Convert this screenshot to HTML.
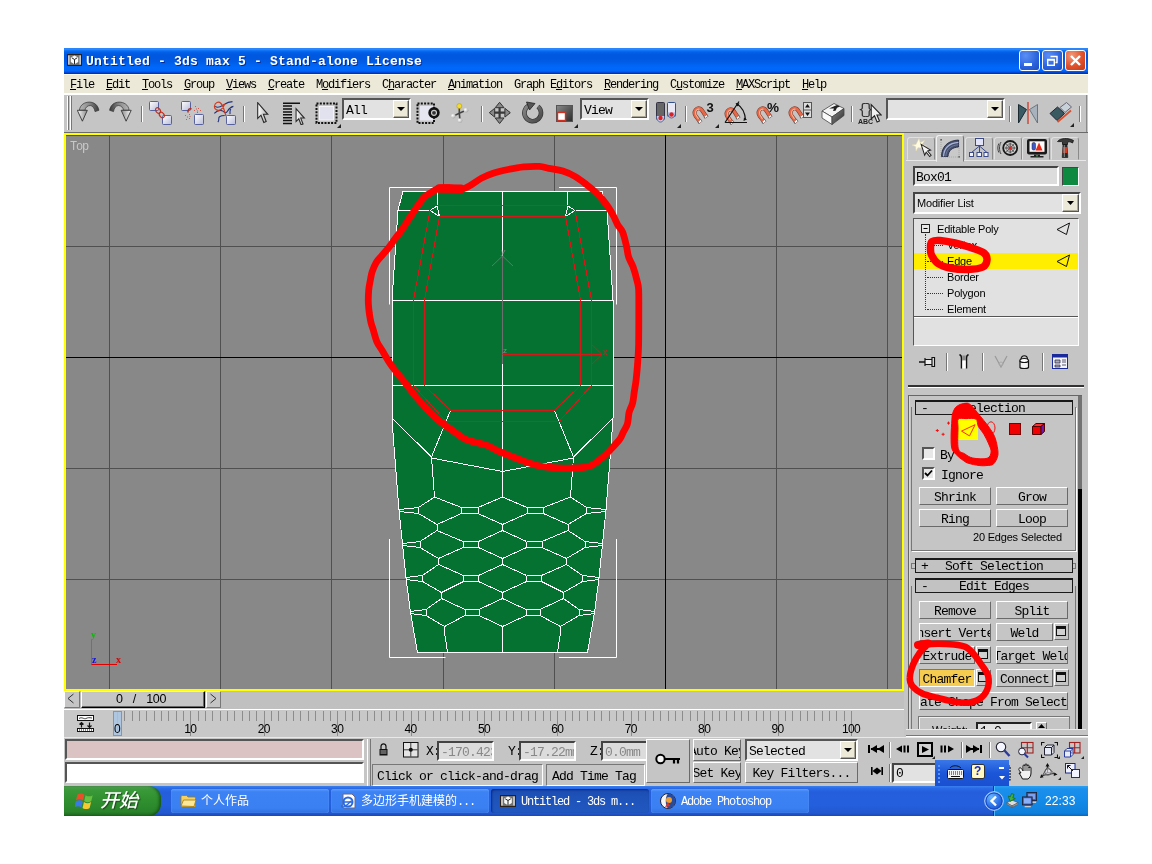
<!DOCTYPE html>
<html lang="zh"><head><meta charset="utf-8"><title>Untitled - 3ds max 5</title>
<style>
html,body{margin:0;padding:0;background:#fff;}
body{width:1152px;height:864px;position:relative;overflow:hidden;will-change:transform;font-family:"Liberation Sans",sans-serif;}
div,svg,span{position:absolute;box-sizing:border-box;}
span{white-space:pre;}
.m12{font:12px/12px "Liberation Mono",monospace;letter-spacing:-1.2px;color:#000;}
.m14{font:13px/14px "Liberation Mono",monospace;letter-spacing:-0.8px;color:#000;}
.s11{font:11px/12px "Liberation Sans",sans-serif;color:#000;letter-spacing:-0.2px;}
.btn{background:#c5c5c5;border:1px solid;border-color:#fff #6a6a6a #6a6a6a #fff;text-align:center;overflow:hidden;}
.btn span{position:static;}
.sunk{border:1px solid;border-color:#555 #fff #fff #555;}
.hdr{background:#c2c2c2;border:1px solid #1a1a1a;border-top-width:2px;text-align:center;}
u{text-decoration:underline;text-underline-offset:1px;}
</style></head>
<body>
<div style="left:64px;top:48px;width:1024px;height:768px;background:#c5c5c5;"></div>
<div style="left:64px;top:48px;width:1024px;height:26px;background:linear-gradient(to bottom,#2a84f8 0%,#2a8aff 5%,#0a6cf4 11%,#0260e8 17%,#0058e0 26%,#0058e2 42%,#005ee8 56%,#0064f4 66%,#0068fc 76%,#0066fa 88%,#0050e0 93%,#0030c0 97%,#0034c4 100%);"></div>
<svg style="left:67px;top:54px" width="15" height="12" viewBox="0 0 15 12"><rect x="0" y="0" width="15" height="12" fill="#2a2018"/><rect x="1" y="1" width="13" height="10" fill="#707070"/><rect x="1.200" y="1.500" width="1.300" height="9" fill="#e0e0e0"/><rect x="12.500" y="1.500" width="1.300" height="9" fill="#e0e0e0"/><path d="M7.500 1.500L11.200 3.500V8L7.500 10.300L3.800 8V3.500Z" fill="#fafafa"/><path d="M7.500 10.300V5.500M7.500 5.500L4.800 3.800M7.500 5.500L10.200 3.800" stroke="#222" stroke-width="1" fill="none"/></svg>
<span style="left:86px;top:54px;font:bold 13px/16px 'Liberation Mono',monospace;letter-spacing:0.2px;color:#fff;text-shadow:1px 1px 0 #0a2a8a;">Untitled - 3ds max 5 - Stand-alone License</span>
<div style="left:1019px;top:50px;width:21px;height:21px;border:1px solid #fff;border-radius:3px;background:radial-gradient(circle at 30% 25%,#5b8ff5 0%,#2a62dc 60%,#1c4cc0 100%);"></div>
<svg style="left:1019px;top:50px" width="21" height="21" viewBox="0 0 21 21"><rect x="5" y="13" width="8" height="3" fill="#fff"/></svg>
<div style="left:1042px;top:50px;width:21px;height:21px;border:1px solid #fff;border-radius:3px;background:radial-gradient(circle at 30% 25%,#5b8ff5 0%,#2a62dc 60%,#1c4cc0 100%);"></div>
<svg style="left:1042px;top:50px" width="21" height="21" viewBox="0 0 21 21"><path d="M8.500 6.500h6.500v6h-1.500" fill="none" stroke="#fff" stroke-width="1.400"/><rect x="5.700" y="9.700" width="6.600" height="5.600" fill="none" stroke="#fff" stroke-width="1.400"/><path d="M5 9.700h8" stroke="#fff" stroke-width="1.800"/></svg>
<div style="left:1065px;top:50px;width:21px;height:21px;border:1px solid #fff;border-radius:3px;background:radial-gradient(circle at 30% 25%,#f09a7a 0%,#e0512c 55%,#c03a18 100%);"></div>
<svg style="left:1065px;top:50px" width="21" height="21" viewBox="0 0 21 21"><path d="M6 6l9 9M15 6l-9 9" stroke="#fff" stroke-width="2.4"/></svg>
<div style="left:64px;top:74px;width:1024px;height:19px;background:#ece9d8;"></div>
<div style="left:64px;top:74px;width:1024px;height:1px;background:#fbf8e6;"></div>
<span class="m12" style="left:70px;top:79px;"><u>F</u>ile</span>
<span class="m12" style="left:106px;top:79px;"><u>E</u>dit</span>
<span class="m12" style="left:142px;top:79px;"><u>T</u>ools</span>
<span class="m12" style="left:184px;top:79px;"><u>G</u>roup</span>
<span class="m12" style="left:226px;top:79px;"><u>V</u>iews</span>
<span class="m12" style="left:268px;top:79px;"><u>C</u>reate</span>
<span class="m12" style="left:316px;top:79px;">M<u>o</u>difiers</span>
<span class="m12" style="left:382px;top:79px;">C<u>h</u>aracter</span>
<span class="m12" style="left:448px;top:79px;"><u>A</u>nimation</span>
<span class="m12" style="left:514px;top:79px;">Graph E<u>d</u>itors</span>
<span class="m12" style="left:604px;top:79px;"><u>R</u>endering</span>
<span class="m12" style="left:670px;top:79px;">C<u>u</u>stomize</span>
<span class="m12" style="left:736px;top:79px;"><u>M</u>AXScript</span>
<span class="m12" style="left:802px;top:79px;"><u>H</u>elp</span>
<div style="left:64px;top:93px;width:1024px;height:40px;background:#c5c5c5;border-top:2px solid #fff;"></div>
<div style="left:1086px;top:95px;width:1px;height:38px;background:#8a8a8a;"></div>
<div style="left:67px;top:96px;width:2px;height:34px;border-left:1px solid #fff;border-right:1px solid #777;"></div>
<div style="left:70px;top:96px;width:2px;height:34px;border-left:1px solid #fff;border-right:1px solid #777;"></div>
<svg width="0" height="0" style="left:0;top:0"><defs>
<linearGradient id="gDark" x1="0" y1="0" x2="1" y2="1"><stop offset="0" stop-color="#8a8a8a"/><stop offset="1" stop-color="#2a2a2a"/></linearGradient>
<linearGradient id="gArc" x1="0" y1="0" x2="1" y2="0"><stop offset="0" stop-color="#b8b8b8"/><stop offset="0.500" stop-color="#8a8a8a"/><stop offset="1" stop-color="#3a3a3a"/></linearGradient>
<linearGradient id="gHead" x1="0" y1="0" x2="1" y2="0"><stop offset="0" stop-color="#fafafa"/><stop offset="1" stop-color="#8a8a8a"/></linearGradient>
<linearGradient id="gCur" x1="0" y1="0" x2="1" y2="0"><stop offset="0" stop-color="#ffffff"/><stop offset="1" stop-color="#b0b0b0"/></linearGradient>
<radialGradient id="gSph" cx="0.35" cy="0.35" r="0.8"><stop offset="0" stop-color="#ffffff"/><stop offset="1" stop-color="#9a9a9a"/></radialGradient>
<linearGradient id="gRot" gradientUnits="userSpaceOnUse" x1="0" y1="0" x2="24" y2="24"><stop offset="0" stop-color="#9a9a9a"/><stop offset="1" stop-color="#3a3a3a"/></linearGradient>
<radialGradient id="gTray" cx="0.35" cy="0.3" r="0.8"><stop offset="0" stop-color="#6ab8ff"/><stop offset="0.6" stop-color="#2a70e8"/><stop offset="1" stop-color="#1a50c8"/></radialGradient>
<linearGradient id="gBox" x1="0" y1="0" x2="1" y2="1"><stop offset="0" stop-color="#ffffff"/><stop offset="1" stop-color="#b8bcd8"/></linearGradient>
<linearGradient id="gMag" x1="0" y1="0" x2="1" y2="1"><stop offset="0" stop-color="#f7b090"/><stop offset="1" stop-color="#d84a28"/></linearGradient>
</defs></svg>
<svg style="left:77px;top:101px" width="23" height="21" viewBox="0 0 23 21"><path d="M2.400 9.300C3 3.500 8 1.100 12.400 1.100C17 1.100 21 4 21.900 9.300L18 10.600C17.500 7 15.500 4.700 13.200 4.500C10.500 4.500 8.300 6.500 8 9.300Z" fill="url(#gArc)" stroke="#333" stroke-width="0.700"/><path d="M0.300 9.300H10.300L5.400 20.200Z" fill="url(#gHead)" stroke="#333" stroke-width="0.900"/></svg>
<svg style="left:109px;top:101px" width="23" height="21" viewBox="0 0 23 21"><g transform="translate(22.500,0) scale(-1,1)"><path d="M2.400 9.300C3 3.500 8 1.100 12.400 1.100C17 1.100 21 4 21.900 9.300L18 10.600C17.500 7 15.500 4.700 13.200 4.500C10.500 4.500 8.300 6.500 8 9.300Z" fill="url(#gArc)" stroke="#333" stroke-width="0.700"/><path d="M0.300 9.300H10.300L5.400 20.200Z" fill="url(#gHead)" stroke="#333" stroke-width="0.900"/></g></svg>
<div style="left:141px;top:106px;width:2px;height:16px;border-left:1px solid #777;border-right:1px solid #fff;"></div>
<svg style="left:149px;top:101px" width="23" height="24" viewBox="0 0 23 24"><rect x="0.500" y="0.500" width="9" height="9" rx="1" fill="url(#gBox)" stroke="#4a5596" stroke-width="0.900"/><rect x="13.500" y="14.500" width="9" height="9" rx="1" fill="url(#gBox)" stroke="#4a5596" stroke-width="0.900"/><ellipse cx="9" cy="9.500" rx="2.100" ry="3" transform="rotate(-38 9 9.500)" fill="none" stroke="#c03020" stroke-width="1.200"/><ellipse cx="12.800" cy="14" rx="2.100" ry="3" transform="rotate(-38 12.800 14)" fill="none" stroke="#c03020" stroke-width="1.200"/></svg>
<svg style="left:181px;top:101px" width="23" height="24" viewBox="0 0 23 24"><rect x="0.500" y="0.500" width="9" height="9" rx="1" fill="url(#gBox)" stroke="#4a5596" stroke-width="0.900"/><rect x="13.500" y="13.500" width="9" height="10" rx="1" fill="url(#gBox)" stroke="#4a5596" stroke-width="0.900"/><path d="M7 11.500c-.5-3 1.500-4.500 3.500-3.500" fill="none" stroke="#b02a20" stroke-width="1.500"/><g fill="#d05a50"><rect x="14" y="5" width="1" height="1"/><rect x="15" y="7.500" width="1" height="1"/><rect x="13" y="9" width="1" height="1"/><rect x="17" y="7" width="1" height="1"/><rect x="16" y="9.500" width="1" height="1"/><rect x="19" y="9" width="1" height="1"/><rect x="16" y="11" width="1" height="1"/><rect x="4" y="14" width="1" height="1"/><rect x="6" y="15.500" width="1" height="1"/><rect x="8" y="13" width="1" height="1"/><rect x="5" y="18" width="1" height="1"/><rect x="8" y="17" width="1" height="1"/><rect x="8.500" y="15" width="1" height="1"/></g></svg>
<svg style="left:213px;top:101px" width="23" height="24" viewBox="0 0 23 24"><rect x="13.500" y="14.500" width="9" height="9" rx="1" fill="url(#gBox)" stroke="#4a5596" stroke-width="0.900"/><path d="M2.200 5.400c3 2.500 6 0 8.700-1.700s3-2.500 8.600-3.100M1.300 12.400c2.500-2.500 5.500-3.500 7.800-2.600s3.500 3.700 5.500 .2s3-4 5.800-4.600M4.800 21c2-1.500 0-4 1.700-5.200s3-1.300 5.200-1.300M17 13.200c-.5-2.500 0-4 .8-5.200" fill="none" stroke="#24357e" stroke-width="1.100"/><path d="M13 15C11 9 10.500 5 8 2.500S2 1.500 1.500 5S5 10.500 8 8.500S11 5 11.500 3" fill="none" stroke="#d03a20" stroke-width="1.200"/></svg>
<div style="left:243px;top:106px;width:2px;height:16px;border-left:1px solid #777;border-right:1px solid #fff;"></div>
<svg style="left:257px;top:102px" width="12" height="22" viewBox="0 0 12 22"><path d="M0.700 0.700 L0.700 16.500 L4 13.200 L6.800 20.500 L9.200 19.500 L6.400 12.300 L10.800 12.300Z" fill="url(#gCur)" stroke="#2a2a2a" stroke-width="1.100"/></svg>
<svg style="left:283px;top:102px" width="23" height="23" viewBox="0 0 23 23"><path d="M0 1.2h17M0 4.1h9M0 7.0h9M0 9.9h9M0 12.8h9M0 15.7h9M0 18.6h9M0 21.5h9" stroke="#111" stroke-width="1.500"/><g transform="translate(12.500,6) scale(.82)"><path d="M0.700 0.700 L0.700 16.500 L4 13.200 L6.800 20.500 L9.200 19.500 L6.400 12.300 L10.800 12.300Z" fill="url(#gCur)" stroke="#2a2a2a" stroke-width="1.300"/></g></svg>
<svg style="left:315px;top:102px" width="23" height="22" viewBox="0 0 23 22"><rect x="1.500" y="1.500" width="20" height="19.500" fill="none" stroke="#111" stroke-width="2" stroke-dasharray="2 1.300"/><rect x="4.500" y="4.500" width="14" height="13.500" fill="#e2e2ee" stroke="#f4f4f8" stroke-width="1"/></svg>
<svg style="left:337px;top:124px" width="4" height="4" viewBox="0 0 4 4"><path d="M4 0v4h-4z" fill="#222"/></svg>
<div style="left:342px;top:98px;width:69px;height:22px;background:#e2e2e2;border:2px solid;border-color:#555 #fff #fff #555;"></div>
<span class="m14" style="left:346px;top:104px;">All</span>
<div style="left:393px;top:100px;width:16px;height:18px;background:#ece9d8;border:1px solid;border-color:#fff #555 #555 #fff;box-shadow:inset -1px -1px 0 #aca899;"></div>
<svg style="left:397px;top:107px" width="8" height="4" viewBox="0 0 8 4"><path d="M0 0h8l-4 4z" fill="#000"/></svg>
<svg style="left:416px;top:102px" width="25" height="22" viewBox="0 0 25 22"><rect x="1.500" y="1.500" width="16.500" height="19.500" fill="none" stroke="#111" stroke-width="2" stroke-dasharray="2 1.300"/><rect x="4" y="4" width="13" height="14.500" fill="#e6e6f0"/><circle cx="18" cy="10.800" r="5.700" fill="#111"/><circle cx="18" cy="10.800" r="2.500" fill="#333" stroke="#c8c8c8" stroke-width="1.200"/></svg>
<svg style="left:450px;top:103px" width="20" height="21" viewBox="0 0 20 21"><path d="M9.300 10.200L9.300 3.100M9.300 10.200L16 7.200M9.300 10.200L3.300 13.100M9.300 10.200L10 17.600" stroke="#444" stroke-width="1.600" fill="none"/><circle cx="9.300" cy="3.100" r="2.500" fill="#f4dc30" stroke="#b89a10" stroke-width=".6"/><circle cx="16" cy="7.200" r="2.400" fill="url(#gSph)"/><circle cx="3.300" cy="13.100" r="2.400" fill="url(#gSph)"/><circle cx="10" cy="17.600" r="2.400" fill="url(#gSph)"/></svg>
<div style="left:481px;top:106px;width:2px;height:16px;border-left:1px solid #777;border-right:1px solid #fff;"></div>
<svg style="left:489px;top:102px" width="22" height="22" viewBox="0 0 22 22"><path d="M10.600 1.500V20.500M1.500 10.700H20.500" stroke="#3a3a3a" stroke-width="2.200"/><path d="M10.600 0.300L15 5.700H6.200ZM10.600 21.500L15 16H6.200ZM0.300 10.700L5.700 6.300V15.100ZM21.300 10.700L15.900 6.300V15.100Z" fill="#8a8a8a" stroke="#333" stroke-width="1"/></svg>
<svg style="left:520px;top:101px" width="24" height="24" viewBox="0 0 24 24"><path d="M9 4.500A8.300 8.300 0 1 0 18 5.500" fill="none" stroke="#333" stroke-width="4.600"/><path d="M9 4.500A8.300 8.300 0 1 0 18 5.500" fill="none" stroke="url(#gRot)" stroke-width="3.200"/><path d="M6.500 1L15 2.500L9.500 9Z" fill="#555" stroke="#222" stroke-width=".8"/></svg>
<svg style="left:556px;top:105px" width="17" height="17" viewBox="0 0 17 17"><rect x="0.5" y="0.5" width="16" height="16" fill="url(#gDark)" stroke="#555"/><rect x="1.5" y="7.5" width="8" height="8" fill="#fff" stroke="#d03020" stroke-width="1.4"/></svg>
<svg style="left:574px;top:124px" width="4" height="4" viewBox="0 0 4 4"><path d="M4 0v4h-4z" fill="#222"/></svg>
<div style="left:580px;top:98px;width:69px;height:22px;background:#e2e2e2;border:2px solid;border-color:#555 #fff #fff #555;"></div>
<span class="m14" style="left:584px;top:104px;">View</span>
<div style="left:631px;top:100px;width:16px;height:18px;background:#ece9d8;border:1px solid;border-color:#fff #555 #555 #fff;box-shadow:inset -1px -1px 0 #aca899;"></div>
<svg style="left:635px;top:107px" width="8" height="4" viewBox="0 0 8 4"><path d="M0 0h8l-4 4z" fill="#000"/></svg>
<svg style="left:656px;top:102px" width="21" height="22" viewBox="0 0 21 22"><rect x="0.5" y="0.5" width="8" height="17" rx="1" fill="#666" stroke="#334"/><rect x="11.500" y="0.5" width="8" height="14" rx="1" fill="#e8e8f4" stroke="#33508a"/><path d="M0.500 14c0 8 8 8 8 0M11.500 10c0 8 8 8 8 0" fill="#c8d0ee" stroke="#33508a" stroke-width=".8"/><circle cx="4.500" cy="16" r="2.200" fill="#e02020"/><circle cx="15.500" cy="12.500" r="2.200" fill="#e02020"/></svg>
<svg style="left:677px;top:124px" width="4" height="4" viewBox="0 0 4 4"><path d="M4 0v4h-4z" fill="#222"/></svg>
<div style="left:685px;top:106px;width:2px;height:16px;border-left:1px solid #777;border-right:1px solid #fff;"></div>
<svg style="left:692px;top:102px" width="23" height="23" viewBox="0 0 23 23"><path d="M8.600 20.500L3.500 13.800C0.800 9.500 4.800 4.800 8.500 6.800C10.200 7.800 12.500 12.300 14.600 15.400" fill="none" stroke="#7a3a28" stroke-width="4" stroke-linecap="butt"/><path d="M8.600 20.500L3.500 13.800C0.800 9.500 4.800 4.800 8.500 6.800C10.200 7.800 12.500 12.300 14.600 15.400" fill="none" stroke="#e8684a" stroke-width="2.900"/><path d="M6.500 17L3.800 12.500C2.500 9.500 5 6.500 7.500 7.300" fill="none" stroke="#f6b498" stroke-width="1.100"/><path d="M8.600 20.500L7.300 18.800M14.600 15.400L13.500 13.700" stroke="#555" stroke-width="4.400"/><path d="M8.600 20.200L7.500 18.800M14.500 15.100L13.600 13.800" stroke="#fafafa" stroke-width="3"/><text x="14.500" y="9.500" font-family="Liberation Sans,sans-serif" font-weight="bold" font-size="13" fill="#111">3</text></svg>
<svg style="left:715px;top:124px" width="4" height="4" viewBox="0 0 4 4"><path d="M4 0v4h-4z" fill="#222"/></svg>
<svg style="left:724px;top:100px" width="25" height="25" viewBox="0 0 25 25"><g transform="translate(0,3)"><path d="M8.600 20.500L3.500 13.800C0.800 9.500 4.800 4.800 8.500 6.800C10.200 7.800 12.500 12.300 14.600 15.400" fill="none" stroke="#7a3a28" stroke-width="4" stroke-linecap="butt"/><path d="M8.600 20.500L3.500 13.800C0.800 9.500 4.800 4.800 8.500 6.800C10.200 7.800 12.500 12.300 14.600 15.400" fill="none" stroke="#e8684a" stroke-width="2.900"/><path d="M6.500 17L3.800 12.500C2.500 9.500 5 6.500 7.500 7.300" fill="none" stroke="#f6b498" stroke-width="1.100"/><path d="M8.600 20.500L7.300 18.800M14.600 15.400L13.500 13.700" stroke="#555" stroke-width="4.400"/><path d="M8.600 20.200L7.500 18.800M14.500 15.100L13.600 13.800" stroke="#fafafa" stroke-width="3"/></g><path d="M1 22.500h22M1 22.500L15 1.500" stroke="#111" stroke-width="1.2" fill="none"/><path d="M13 4c5 3 8 9 8.500 16" fill="none" stroke="#111" stroke-width="1.200"/><path d="M11.500 3l4 .5l-2 3zM19.500 21l3.500-1.500l-3-2z" fill="#111"/></svg>
<svg style="left:756px;top:102px" width="24" height="23" viewBox="0 0 24 23"><path d="M8.600 20.500L3.500 13.800C0.800 9.500 4.800 4.800 8.500 6.800C10.200 7.800 12.500 12.300 14.600 15.400" fill="none" stroke="#7a3a28" stroke-width="4" stroke-linecap="butt"/><path d="M8.600 20.500L3.500 13.800C0.800 9.500 4.800 4.800 8.500 6.800C10.200 7.800 12.500 12.300 14.600 15.400" fill="none" stroke="#e8684a" stroke-width="2.900"/><path d="M6.500 17L3.800 12.500C2.500 9.500 5 6.500 7.500 7.300" fill="none" stroke="#f6b498" stroke-width="1.100"/><path d="M8.600 20.500L7.300 18.800M14.600 15.400L13.500 13.700" stroke="#555" stroke-width="4.400"/><path d="M8.600 20.200L7.500 18.800M14.500 15.100L13.600 13.800" stroke="#fafafa" stroke-width="3"/><text x="11" y="10" font-family="Liberation Sans,sans-serif" font-weight="bold" font-size="13.500" fill="#111">%</text></svg>
<svg style="left:788px;top:102px" width="24" height="23" viewBox="0 0 24 23"><path d="M8.600 20.500L3.500 13.800C0.800 9.500 4.800 4.800 8.500 6.800C10.200 7.800 12.500 12.300 14.600 15.400" fill="none" stroke="#7a3a28" stroke-width="4" stroke-linecap="butt"/><path d="M8.600 20.500L3.500 13.800C0.800 9.500 4.800 4.800 8.500 6.800C10.200 7.800 12.500 12.300 14.600 15.400" fill="none" stroke="#e8684a" stroke-width="2.900"/><path d="M6.500 17L3.800 12.500C2.500 9.500 5 6.500 7.500 7.300" fill="none" stroke="#f6b498" stroke-width="1.100"/><path d="M8.600 20.500L7.300 18.800M14.600 15.400L13.500 13.700" stroke="#555" stroke-width="4.400"/><path d="M8.600 20.200L7.500 18.800M14.500 15.100L13.600 13.800" stroke="#fafafa" stroke-width="3"/><rect x="15.500" y="0.500" width="8" height="15" fill="#ddd" stroke="#555"/><path d="M17 5.500h5l-2.500-3.500zM17 10.500h5l-2.500 3.500z" fill="#111"/><path d="M15.500 8h8" stroke="#555"/></svg>
<svg style="left:821px;top:102px" width="24" height="23" viewBox="0 0 24 23"><path d="M1 9L13 1.500L23 6.500L11 15Z" fill="#f4f4f4" stroke="#444" stroke-width=".8"/><path d="M1 9v7l10 6.500V15z" fill="#fafafa" stroke="#444" stroke-width=".8"/><path d="M11 15l12-8.500v7L11 22.500z" fill="url(#gDark)" stroke="#444" stroke-width=".8"/><path d="M8 6.500l8-3.500l3 1.500l-3 1.300l-1.500 3l-2.500 .2l1-2.500z" fill="#222"/></svg>
<div style="left:851px;top:106px;width:2px;height:16px;border-left:1px solid #777;border-right:1px solid #fff;"></div>
<svg style="left:858px;top:101px" width="24" height="24" viewBox="0 0 24 24"><text x="0" y="13" font-family="Liberation Mono,monospace" font-size="15" letter-spacing="-2.500" fill="#333">{}</text><text x="0" y="23" font-family="Liberation Sans,sans-serif" font-weight="bold" font-size="7" fill="#222">ABC</text><g transform="translate(12.500,3)"><path d="M0.700 0.700 L0.700 15 L4 11.800 L6.600 18 L9 17 L6.400 11 L10.800 11Z" fill="#f2f2f2" stroke="#222" stroke-width="1.100"/></g></svg>
<div style="left:886px;top:98px;width:119px;height:22px;background:#e2e2e2;border:2px solid;border-color:#555 #fff #fff #555;"></div>
<div style="left:987px;top:100px;width:16px;height:18px;background:#ece9d8;border:1px solid;border-color:#fff #555 #555 #fff;box-shadow:inset -1px -1px 0 #aca899;"></div>
<svg style="left:991px;top:107px" width="8" height="4" viewBox="0 0 8 4"><path d="M0 0h8l-4 4z" fill="#000"/></svg>
<div style="left:1009px;top:106px;width:2px;height:16px;border-left:1px solid #777;border-right:1px solid #fff;"></div>
<svg style="left:1017px;top:102px" width="22" height="22" viewBox="0 0 22 22"><path d="M1.500 2.500V21L9.500 7.500Z" fill="#3a5a64" stroke="#1a2a30"/><path d="M20.500 2.500V21L12.500 7.500Z" fill="#a8b2bc" stroke="#5a6470" stroke-width=".8"/><path d="M11 0v22" stroke="#d04030" stroke-width="1.400"/></svg>
<svg style="left:1049px;top:102px" width="23" height="22" viewBox="0 0 23 22"><path d="M1 11.500L8.500 5l7 6.500l-7.500 7z" fill="#3a5a62" stroke="#223"/><path d="M11 5.500l6.500-5l5 4.500l-6.500 5.500z" fill="#c8d0d8" stroke="#667"/><path d="M8.500 20L22 8.500" stroke="#d85030" stroke-width="1.800"/></svg>
<svg style="left:1070px;top:123px" width="4" height="4" viewBox="0 0 4 4"><path d="M4 0v4h-4z" fill="#222"/></svg>
<div style="left:1079px;top:106px;width:2px;height:16px;border-left:1px solid #777;border-right:1px solid #fff;"></div>
<svg style="left:64px;top:133px" width="840" height="558" viewBox="64 133 840 558"><rect x="64" y="133" width="840" height="558" fill="#ffff00"/><rect x="66" y="135" width="836" height="554" fill="#888888"/><path d="M109.5 135V689" stroke="#505050" stroke-width="1"/><path d="M220.5 135V689" stroke="#505050" stroke-width="1"/><path d="M331.5 135V689" stroke="#505050" stroke-width="1"/><path d="M443.5 135V689" stroke="#505050" stroke-width="1"/><path d="M554.5 135V689" stroke="#505050" stroke-width="1"/><path d="M776.5 135V689" stroke="#505050" stroke-width="1"/><path d="M887.5 135V689" stroke="#505050" stroke-width="1"/><path d="M66 246.5H902" stroke="#505050" stroke-width="1"/><path d="M66 468.5H902" stroke="#505050" stroke-width="1"/><path d="M66 579.5H902" stroke="#505050" stroke-width="1"/><path d="M66 135.500H902" stroke="#4a4a5a" stroke-width="1"/><path d="M665.5 135V689M66 357.500H902" stroke="#000" stroke-width="1"/><text x="70" y="150" font-family="Liberation Mono,monospace" font-size="12" letter-spacing="-1.2" fill="#c8c8c8">Top</text><polygon points="403.0,191.5 398.0,210 392.0,300 392.0,418 393.5,440 399.0,510 402.5,544 406.0,578 410.5,612.5 417.5,652.5 587.5,652.5 594.5,612.5 599.0,578 602.5,544 606.0,510 611.5,440 613.0,418 613.0,300 607.0,210 602.0,191.5" fill="#067232" stroke="#fff" stroke-width="1" shape-rendering="crispEdges"/><path d="M398.0 210.5 L430 210.5 M575 210.5 L607.0 210.5 M392 300.5 L613 300.5 M392 385.5 L613 385.5 M502.5 191.5 L502.5 256 M502.5 364 L502.5 471.5 M502.5 626.5 L502.5 652 M438 192 L437 206 L439.5 216.5 M567.0 192 L568.0 206 L565.5 216.5 M430 210.5 L437 206 M575.0 210.5 L568.0 206 M430 210.5 L439.5 216.5 M575.0 210.5 L565.5 216.5 M392 418 L431.5 457 M613.0 418 L573.5 457 M450.5 410.5 L431.5 457 M554.5 410.5 L573.5 457 M431.5 458 L502.5 471.5 M573.5 458 L502.5 471.5 M431.5 457 L434.5 497 M573.5 457 L570.5 497 M502.5 471.5 L502.5 496.5 M502.5 497 L478.0 507.5 M502.5 497 L527.0 507.5 M502.5 524.5 L478.0 513.5 M502.5 524.5 L527.0 513.5 M478.0 507.5 L461.5 507.5 L461.5 513.5 L478.0 513.5 L478.0 507.5 M527.0 507.5 L543.5 507.5 L543.5 513.5 L527.0 513.5 L527.0 507.5 M461.5 507.5 L434.5 497 M543.5 507.5 L570.5 497 M461.5 513.5 L437.0 524.5 M543.5 513.5 L568.0 524.5 M434.5 497 L418.5 507.5 M570.5 497 L586.5 507.5 M437.0 524.5 L418.5 513.5 M568.0 524.5 L586.5 513.5 M418.5 507.5 L418.5 513.5 M586.5 507.5 L586.5 513.5 M418.5 507.5 L399.0 509.5 M586.5 507.5 L606.0 509.5 M418.5 513.5 L399.0 511.5 M586.5 513.5 L606.0 511.5 M502.5 524.5 L502.5 530.5 M437.0 524.5 L437.0 530.5 M568.0 524.5 L568.0 530.5 M502.5 530.5 L478.5 541.5 M502.5 530.5 L526.5 541.5 M502.5 558.5 L478.5 547.5 M502.5 558.5 L526.5 547.5 M478.5 541.5 L463.0 541.5 L463.0 547.5 L478.5 547.5 L478.5 541.5 M526.5 541.5 L542.0 541.5 L542.0 547.5 L526.5 547.5 L526.5 541.5 M463.0 541.5 L437.0 530.5 M542.0 541.5 L568.0 530.5 M463.0 547.5 L438.5 558.5 M542.0 547.5 L566.5 558.5 M437.0 530.5 L420.0 541.5 M568.0 530.5 L585.0 541.5 M438.5 558.5 L420.0 547.5 M566.5 558.5 L585.0 547.5 M420.0 541.5 L420.0 547.5 M585.0 541.5 L585.0 547.5 M420.0 541.5 L402.5 543.5 M585.0 541.5 L602.5 543.5 M420.0 547.5 L402.5 545.5 M585.0 547.5 L602.5 545.5 M502.5 558.5 L502.5 564.5 M438.5 558.5 L438.5 564.5 M566.5 558.5 L566.5 564.5 M502.5 564.5 L478.5 575.5 M502.5 564.5 L526.5 575.5 M502.5 592.5 L478.5 581.5 M502.5 592.5 L526.5 581.5 M478.5 575.5 L463.5 575.5 L463.5 581.5 L478.5 581.5 L478.5 575.5 M526.5 575.5 L541.5 575.5 L541.5 581.5 L526.5 581.5 L526.5 575.5 M463.5 575.5 L438.5 564.5 M541.5 575.5 L566.5 564.5 M463.5 581.5 L441.5 592.5 M541.5 581.5 L563.5 592.5 M438.5 564.5 L422.5 575.5 M566.5 564.5 L582.5 575.5 M441.5 592.5 L422.5 581.5 M563.5 592.5 L582.5 581.5 M422.5 575.5 L422.5 581.5 M582.5 575.5 L582.5 581.5 M422.5 575.5 L406.0 577.5 M582.5 575.5 L599.0 577.5 M422.5 581.5 L406.0 579.5 M582.5 581.5 L599.0 579.5 M502.5 592.5 L502.5 598.5 M441.5 592.5 L441.5 598.5 M563.5 592.5 L563.5 598.5 M502.5 598.5 L479.0 609.5 M502.5 598.5 L526.0 609.5 M502.5 626.5 L479.0 615.5 M502.5 626.5 L526.0 615.5 M479.0 609.5 L465.0 609.5 L465.0 615.5 L479.0 615.5 L479.0 609.5 M526.0 609.5 L540.0 609.5 L540.0 615.5 L526.0 615.5 L526.0 609.5 M465.0 609.5 L441.5 598.5 M540.0 609.5 L563.5 598.5 M465.0 615.5 L444.5 626.5 M540.0 615.5 L560.5 626.5 M441.5 598.5 L426.0 609.5 M563.5 598.5 L579.0 609.5 M444.5 626.5 L426.0 615.5 M560.5 626.5 L579.0 615.5 M426.0 609.5 L426.0 615.5 M579.0 609.5 L579.0 615.5 M426.0 609.5 L410.5 611.5 M579.0 609.5 L594.5 611.5 M426.0 615.5 L410.5 613.5 M579.0 615.5 L594.5 613.5 M502.5 626.5 L502.5 632.5 M444.5 626.5 L444.5 632.5 M560.5 626.5 L560.5 632.5 M444.5 632.5 L447.5 652 M560.5 632.5 L557.5 652" fill="none" stroke="#fff" stroke-width="1" shape-rendering="crispEdges"/><path d="M437 205.5 L568 205.5 M439.5 216.5 L565.5 216.5 M430 210.5 L413.5 300 L413.5 385.5 L446 421.5 L502.5 421.5 M575.0 210.5 L591.5 300 L591.5 385.5 L559.0 421.5 L502.5 421.5 M439.5 216.5 L424.5 300 L424.5 385.5 L450.5 410.5 L502.5 410.5 M565.5 216.5 L580.5 300 L580.5 385.5 L554.5 410.5 L502.5 410.5" fill="none" stroke="#d81818" stroke-width="1" shape-rendering="crispEdges"/><path d="M502.5 256V364M502.5 256L492 266M502.5 256L513 266" stroke="#6e6e6e" stroke-width="1" fill="none"/><path d="M502.5 354.500H602M592 345L602 354.500L592 364" stroke="#d81818" stroke-width="1" fill="none"/><text x="603" y="355" font-family="Liberation Sans,sans-serif" font-size="9" fill="#d02020">x</text><text x="503" y="353" font-family="Liberation Sans,sans-serif" font-size="8" fill="#8a8a8a">z</text><text x="501" y="254" font-family="Liberation Sans,sans-serif" font-size="8" font-style="italic" fill="#8a8a8a">y</text><path d="M433 187.500H389.500V304.500M559 187.500H616.500V304.500M389.500 539V657.500H445.500M616.500 539V657.500H559" fill="none" stroke="#fff" stroke-width="1"/><path d="M91.500 664.500V640" stroke="#00c000" stroke-width="1"/><path d="M91.500 664.500H117" stroke="#e00000" stroke-width="1"/><text x="91" y="638" font-family="Liberation Serif,serif" font-size="10" font-weight="bold" fill="#00c000">y</text><text x="92" y="663" font-family="Liberation Serif,serif" font-size="10" font-weight="bold" fill="#1010e0">z</text><text x="116" y="663" font-family="Liberation Serif,serif" font-size="10" font-weight="bold" fill="#e00000">x</text><path d="M432.0 192.0C434.6 190.3 436.3 188.7 439.4 188.0C442.4 187.3 446.7 187.6 450.3 187.8C453.9 188.0 457.9 189.7 461.2 189.3C464.6 188.9 467.2 187.1 470.6 185.2C474.0 183.3 478.0 180.1 481.6 178.1C485.2 176.1 488.1 174.8 492.5 173.4C496.9 172.0 502.9 170.6 508.1 169.5C513.3 168.4 518.5 167.4 523.8 166.9C529.0 166.4 535.2 166.2 539.4 166.4C543.6 166.7 544.9 167.6 548.8 168.4C552.6 169.2 558.4 169.7 562.8 171.1C567.2 172.5 571.4 174.4 575.3 176.6C579.2 178.8 582.9 181.8 586.2 184.4C589.6 187.0 592.9 189.7 595.6 192.2C598.3 194.7 600.4 196.9 602.5 199.5C604.6 202.1 606.7 204.8 608.5 207.5C610.3 210.2 612.0 213.1 613.5 216.0C615.0 218.9 616.3 222.3 617.8 225.0C619.3 227.7 621.2 228.5 622.6 232.0C624.0 235.5 625.4 241.6 626.4 245.8C627.4 250.0 627.5 253.5 628.6 257.0C629.7 260.5 631.6 262.8 633.0 266.7C634.4 270.6 636.1 276.9 637.0 280.6C637.9 284.3 638.3 284.4 638.6 289.0C638.9 293.6 638.8 298.7 638.8 308.0C638.8 317.3 638.8 335.5 638.6 345.0C638.4 354.5 637.9 359.2 637.5 365.0C637.1 370.8 636.6 375.6 636.1 380.0C635.6 384.4 634.9 387.8 634.3 391.6C633.7 395.5 633.5 399.6 632.6 403.1C631.7 406.6 630.0 408.9 629.1 412.4C628.2 415.9 628.4 420.7 627.4 424.0C626.4 427.3 624.5 429.6 623.3 432.1C622.0 434.6 621.8 436.3 619.9 439.0C618.0 441.7 614.7 445.2 611.8 448.3C608.9 451.4 606.2 454.5 602.5 457.5C598.8 460.5 594.4 464.4 589.8 466.2C585.2 467.9 580.1 467.7 574.7 468.0C569.3 468.3 562.7 468.1 557.4 467.9C552.1 467.7 547.2 467.3 542.9 466.6C538.6 465.9 535.4 464.9 531.6 463.8C527.8 462.7 524.1 461.2 520.3 459.8C516.5 458.4 512.8 456.8 509.0 455.3C505.2 453.8 501.5 452.5 497.7 450.8C493.9 449.1 490.2 446.5 486.4 445.1C482.6 443.7 478.9 443.4 475.1 442.3C471.4 441.2 467.6 440.4 463.9 438.4C460.1 436.4 456.4 433.1 452.6 430.5C448.8 427.9 445.1 425.6 441.3 422.6C437.5 419.6 433.1 415.5 430.0 412.4C426.9 409.3 425.1 407.0 422.5 404.1C419.9 401.2 417.1 398.1 414.4 394.8C411.7 391.5 409.2 388.1 406.3 384.4C403.4 380.7 399.7 376.3 397.0 372.8C394.3 369.3 392.4 367.1 390.1 363.6C387.8 360.1 385.3 355.7 383.1 352.0C380.9 348.3 378.4 345.3 376.8 341.6C375.2 337.9 374.3 333.2 373.3 330.0C372.3 326.8 371.7 325.4 371.0 322.6C370.3 319.8 369.8 316.8 369.3 313.3C368.9 309.8 368.4 305.7 368.3 301.8C368.2 297.9 368.4 293.9 368.7 290.2C369.0 286.5 369.8 282.9 370.4 279.8C371.0 276.7 371.2 274.6 372.2 271.7C373.2 268.8 374.6 265.1 376.2 262.4C377.8 259.7 379.9 258.0 382.0 255.5C384.1 253.0 386.8 250.1 388.9 247.4C391.0 244.7 392.6 242.2 394.7 239.3C396.8 236.4 398.7 234.3 401.7 230.0C404.7 225.7 408.9 218.8 412.5 213.5C416.1 208.2 420.2 201.6 423.5 198.0C426.8 194.4 429.4 193.7 432.0 192.0Z" fill="none" stroke="#ff0000" stroke-width="6.800" stroke-linejoin="round"/><path d="M439 188.600L461 188.800" fill="none" stroke="#ff0000" stroke-width="8.500" stroke-linecap="round"/></svg>
<div style="left:906px;top:160px;width:180px;height:1px;background:#e8e8e8;"></div>
<div style="left:907px;top:137px;width:28px;height:23px;background:#c5c5c5;border:1px solid;border-color:#e0e0e0 #8a8a8a transparent #e0e0e0;border-radius:3px 3px 0 0;"></div>
<div style="left:936px;top:135px;width:28px;height:27px;background:#c9c9c9;border:1px solid;border-color:#f0f0f0 #777 #c9c9c9 #f0f0f0;border-radius:3px 3px 0 0;"></div>
<div style="left:965px;top:137px;width:28px;height:23px;background:#c5c5c5;border:1px solid;border-color:#e0e0e0 #8a8a8a transparent #e0e0e0;border-radius:3px 3px 0 0;"></div>
<div style="left:994px;top:137px;width:28px;height:23px;background:#c5c5c5;border:1px solid;border-color:#e0e0e0 #8a8a8a transparent #e0e0e0;border-radius:3px 3px 0 0;"></div>
<div style="left:1022px;top:137px;width:28px;height:23px;background:#c5c5c5;border:1px solid;border-color:#e0e0e0 #8a8a8a transparent #e0e0e0;border-radius:3px 3px 0 0;"></div>
<div style="left:1051px;top:137px;width:28px;height:23px;background:#c5c5c5;border:1px solid;border-color:#e0e0e0 #8a8a8a transparent #e0e0e0;border-radius:3px 3px 0 0;"></div>
<svg style="left:912px;top:138px" width="20" height="21" viewBox="0 0 20 21"><path d="M7 0.500l1.200 4.300l4.300-2.300l-2.500 4l4.500 1.500l-4.500 1l-1.500 1l-2.500-.5l-2 3.500l-.3-4.500l-3.700-1.500l4-.5z" fill="#fffbe0" stroke="#e8dca8" stroke-width=".5"/><g transform="translate(8.500,6) scale(.72)"><path d="M0.700 0.700 L0.700 16.500 L4 13.200 L6.800 20.500 L9.200 19.500 L6.400 12.300 L10.800 12.300Z" fill="#f6f6f6" stroke="#222" stroke-width="1.400" transform="rotate(-18 0 0)"/></g></svg>
<svg style="left:940px;top:138px" width="21" height="20" viewBox="0 0 21 20"><path d="M1.500 18.500C1.500 8.500 8 2.500 18.500 2V9C12.500 9.500 8.500 12 8 18.500Z" fill="#46506e" stroke="#1a2038" stroke-width=".8"/><path d="M3.500 18.500C4 10 9.500 5 18.500 4.300" fill="none" stroke="#aab4d8" stroke-width="1.300"/><path d="M5.800 18.500C6.300 11.500 10.500 7.300 18.500 6.800" fill="none" stroke="#6a769c" stroke-width="1"/><rect x="0.500" y="1.200" width="1.200" height="1.200" fill="#111"/><rect x="18.500" y="18.300" width="1.200" height="1.200" fill="#111"/><path d="M1 2v16.500M1.500 19h17M19 2.500v16" fill="none" stroke="#555" stroke-width=".5" stroke-dasharray=".6 1.400"/></svg>
<svg style="left:968px;top:138px" width="22" height="20" viewBox="0 0 22 20"><rect x="7.500" y="0.500" width="8" height="7" fill="#e4e4f8" stroke="#3a4a8a"/><path d="M11.500 8L3.500 14.500M11.500 8v6.500M11.500 8L19 14.500" fill="none" stroke="#3a4a8a"/><rect x="1.500" y="14.500" width="4" height="4" fill="#f4f4ff" stroke="#3a4a8a"/><rect x="9" y="14.500" width="4.500" height="4" fill="#f4f4ff" stroke="#3a4a8a"/><rect x="16" y="14.500" width="4" height="4" fill="#f4f4ff" stroke="#3a4a8a"/></svg>
<svg style="left:996px;top:139px" width="24" height="20" viewBox="0 0 24 20"><circle cx="14.200" cy="9" r="7" fill="#d8d8d8" stroke="#1a1a1a" stroke-width="1.800"/><circle cx="14.200" cy="9" r="4.200" fill="#c0c0c0" stroke="#555" stroke-width=".7"/><path d="M14.200 3.500v11M8.700 9h11M10.300 5.100l7.800 7.800M18.100 5.100l-7.800 7.800" stroke="#333" stroke-width=".8"/><circle cx="14.200" cy="9" r="1.500" fill="#e82020"/><path d="M5 3C3 6.500 3 11.500 5 15M2.800 4.500C1.500 7.500 1.500 10.500 2.800 13.500" fill="none" stroke="#444" stroke-width="1"/></svg>
<svg style="left:1026px;top:138px" width="22" height="21" viewBox="0 0 22 21"><rect x="1" y="1" width="20" height="15.500" rx="2" fill="#1a1a1a"/><rect x="3.500" y="3.300" width="15" height="10.500" fill="#fafafa"/><rect x="6" y="4.500" width="3.500" height="7.500" rx="1.500" fill="#4058c8" stroke="#223" stroke-width=".5"/><path d="M9.500 12.500l3.500-8l3.500 8z" fill="#e82818"/><path d="M8 16.500h6v1.500h3.500v1.500H4.500v-1.500H8z" fill="#222"/><rect x="10" y="17.300" width="2" height="1" fill="#30c050"/></svg>
<svg style="left:1056px;top:137px" width="20" height="22" viewBox="0 0 20 22"><path d="M1.500 4.500C4 1 12 0.500 17.500 3.500L16.500 6C14.500 4.500 12.500 4.500 11.500 5.500V7.500H6.500V5C5 4 3 5 1.500 4.500Z" fill="#3a3a3a" stroke="#111" stroke-width=".8"/><path d="M7 7.500h4l.8 13h-5.600z" fill="#2a2a2a" stroke="#111" stroke-width=".6"/><path d="M7.100 10h3.800l.4 6h-4.600z" fill="#d83a20"/><path d="M8.300 8v12" stroke="#9a9a9a" stroke-width=".9"/></svg>
<div style="left:913px;top:166px;width:146px;height:20px;background:#dcdcdc;border:2px solid;border-color:#444 #fff #fff #444;"></div>
<span class="m14" style="left:916px;top:171px;">Box01</span>
<div style="left:1062px;top:167px;width:17px;height:19px;background:#0d8a40;border:1px solid;border-color:#444 #fff #fff #444;"></div>
<div style="left:913px;top:192px;width:168px;height:22px;background:#e2e2e2;border:2px solid;border-color:#444 #fff #fff #444;"></div>
<span class="s11" style="left:917px;top:197px;">Modifier List</span>
<div style="left:1062px;top:194px;width:17px;height:18px;background:#ece9d8;border:1px solid;border-color:#fff #555 #555 #fff;box-shadow:inset -1px -1px 0 #aca899;"></div>
<svg style="left:1067px;top:201px" width="7" height="4" viewBox="0 0 7 4"><path d="M0 0h7l-3.500 4z" fill="#000"/></svg>
<div style="left:913px;top:218px;width:166px;height:128px;background:#e1e1e1;border:1px solid;border-color:#555 #fff #fff #555;"></div>
<div style="left:914px;top:316px;width:164px;height:2px;border-top:1px solid #555;border-bottom:1px solid #fff;"></div>
<div style="left:914px;top:253px;width:164px;height:16px;background:#ffee00;"></div>
<svg style="left:921px;top:224px" width="10" height="10" viewBox="0 0 10 10"><rect x="0.500" y="0.500" width="8" height="8" fill="#e8e8e8" stroke="#222"/><path d="M2.500 4.500h4" stroke="#000"/></svg>
<span class="s11" style="left:937px;top:223px;">Editable Poly</span>
<span class="s11" style="left:947px;top:239px;">Vertex</span>
<div style="left:927px;top:245px;width:16px;height:1px;border-top:1px dotted #333;"></div>
<span class="s11" style="left:947px;top:255px;">Edge</span>
<div style="left:927px;top:261px;width:16px;height:1px;border-top:1px dotted #333;"></div>
<span class="s11" style="left:947px;top:271px;">Border</span>
<div style="left:927px;top:277px;width:16px;height:1px;border-top:1px dotted #333;"></div>
<span class="s11" style="left:947px;top:287px;">Polygon</span>
<div style="left:927px;top:293px;width:16px;height:1px;border-top:1px dotted #333;"></div>
<span class="s11" style="left:947px;top:303px;">Element</span>
<div style="left:927px;top:309px;width:16px;height:1px;border-top:1px dotted #333;"></div>
<div style="left:925px;top:234px;width:1px;height:76px;border-left:1px dotted #333;"></div>
<svg style="left:1056px;top:222px" width="15" height="14" viewBox="0 0 15 14"><path d="M1 7.500L13.500 1L10.500 12.500Z" fill="none" stroke="#111" stroke-width="1"/></svg>
<svg style="left:1056px;top:254px" width="15" height="14" viewBox="0 0 15 14"><path d="M1 7.500L13.500 1L10.500 12.500Z" fill="none" stroke="#111" stroke-width="1"/></svg>
<svg style="left:919px;top:355px" width="18" height="14" viewBox="0 0 18 14"><path d="M0 7h6" stroke="#111" stroke-width="1.500"/><path d="M6 3v8M6 4.500h7v5h-7M13 2.500v9h2.500v-9z" fill="#eee" stroke="#111" stroke-width="1.200"/></svg>
<div style="left:946px;top:353px;width:2px;height:18px;border-left:1px solid #777;border-right:1px solid #fff;"></div>
<svg style="left:959px;top:354px" width="11" height="15" viewBox="0 0 11 15"><path d="M0.500 0.500C2.500 1.500 2.500 3 2.500 4V14.500M9.500 0.500C7.500 1.500 7.500 3 7.500 4V14.500" fill="none" stroke="#111" stroke-width="1.500"/><path d="M3.300 1.500h3.400v5h-3.400z" fill="#8a8a8a"/><path d="M3.300 6.500h3.400v8h-3.400z" fill="#fff"/></svg>
<div style="left:982px;top:353px;width:2px;height:18px;border-left:1px solid #777;border-right:1px solid #fff;"></div>
<svg style="left:994px;top:355px" width="15" height="14" viewBox="0 0 15 14"><path d="M1 1l6 11l6-11" fill="none" stroke="#999" stroke-width="1.200"/><circle cx="7" cy="9" r="2" fill="none" stroke="#aaa"/></svg>
<svg style="left:1018px;top:355px" width="13" height="14" viewBox="0 0 13 14"><path d="M2 5.500v7c1.500 1.500 7 1.500 8.500 0v-7" fill="#f4f4f4" stroke="#111" stroke-width="1.200"/><ellipse cx="6.200" cy="5.500" rx="4.300" ry="2" fill="#fff" stroke="#111" stroke-width="1.200"/><path d="M3 4.500c0-5 6.500-5 6.500 0" fill="none" stroke="#111" stroke-width="1.200"/></svg>
<div style="left:1042px;top:353px;width:2px;height:18px;border-left:1px solid #777;border-right:1px solid #fff;"></div>
<svg style="left:1052px;top:354px" width="17" height="16" viewBox="0 0 17 16"><rect x="0.500" y="0.500" width="15" height="14" fill="#f4f4ff" stroke="#1a2a9a"/><rect x="0.500" y="0.500" width="15" height="3" fill="#1a2a9a"/><path d="M3 6h5v3h-5zM10 6h4M10 8h4M3 11h5v2h-5zM10 11h4" fill="#aab" stroke="#334" stroke-width=".8"/></svg>
<div style="left:908px;top:385px;width:176px;height:3px;border-top:2px solid #333;border-bottom:1px solid #fff;"></div>
<div style="left:908px;top:395px;width:174px;height:334px;border-left:1px solid #666;border-top:1px solid #666;"></div>
<div style="left:909px;top:396px;width:1px;height:333px;background:#d8d8d8;"></div>
<div style="left:1078px;top:396px;width:4px;height:93px;background:#727272;"></div>
<div style="left:1078px;top:489px;width:4px;height:240px;background:#000;"></div>
<div style="left:906px;top:729px;width:180px;height:1px;background:#e8e8e8;"></div>
<div style="left:906px;top:735px;width:182px;height:2px;border-top:1px solid #777;border-bottom:1px solid #fff;"></div>
<div style="left:911px;top:407px;width:165px;height:144px;border:1px solid #777;border-top:none;box-shadow:1px 1px 0 #fff;"></div>
<div class="hdr" style="left:915px;top:400px;width:158px;height:15px;"></div>
<span class="m14" style="left:921px;top:402px;">-</span>
<span class="m14" style="left:962px;top:402px;">Selection</span>
<svg style="left:934px;top:420px" width="18" height="18" viewBox="0 0 18 18"><path d="M13 3.100h3M14.500 1.600v3M1.800 10.500h3M3.300 9v3M7.600 14.300h3M9.100 12.800v3" stroke="#f01010" stroke-width="1"/></svg>
<div style="left:958px;top:419px;width:20px;height:21px;background:#ffff00;"></div>
<svg style="left:958px;top:419px" width="20" height="21" viewBox="0 0 20 21"><path d="M3.500 12.100L17.100 5.700L11.500 16.900Z" fill="none" stroke="#ff2a1a" stroke-width="1"/></svg>
<svg style="left:986px;top:421px" width="10" height="14" viewBox="0 0 10 14"><ellipse cx="5" cy="7" rx="4" ry="6.200" fill="none" stroke="#f01010" stroke-width="1"/></svg>
<div style="left:1009px;top:423px;width:12px;height:12px;background:#f00000;border:1px solid #7a0000;"></div>
<svg style="left:1032px;top:423px" width="14" height="12" viewBox="0 0 14 12"><path d="M0.500 3.500h8.500v8h-8.500z" fill="#f00000" stroke="#500"/><path d="M0.500 3.500l3.500-3h8.500l-3.500 3z" fill="#ff3030" stroke="#500"/><path d="M9 3.500l3.500-3v8l-3.500 3z" fill="#7018a8" stroke="#500"/></svg>
<div style="left:922px;top:447px;width:13px;height:13px;background:#e8e8e8;border:2px solid;border-color:#555 #fff #fff #555;"></div>
<span class="m14" style="left:940px;top:449px;">By</span>
<div style="left:922px;top:467px;width:13px;height:13px;background:#e8e8e8;border:2px solid;border-color:#555 #fff #fff #555;"></div>
<svg style="left:924px;top:469px" width="9" height="9" viewBox="0 0 9 9"><path d="M1 4l2.500 2.500l4.500-5" fill="none" stroke="#000" stroke-width="1.800"/></svg>
<span class="m14" style="left:941px;top:469px;">Ignore</span>
<div class="btn" style="left:919px;top:487px;width:72px;height:18px;"><span class="m14" style="position:absolute;left:14.0px;top:2.5px;">Shrink</span></div>
<div class="btn" style="left:996px;top:487px;width:72px;height:18px;"><span class="m14" style="position:absolute;left:21.0px;top:2.5px;">Grow</span></div>
<div class="btn" style="left:919px;top:509px;width:72px;height:18px;"><span class="m14" style="position:absolute;left:21.0px;top:2.5px;">Ring</span></div>
<div class="btn" style="left:996px;top:509px;width:72px;height:18px;"><span class="m14" style="position:absolute;left:21.0px;top:2.5px;">Loop</span></div>
<span class="s11" style="left:973px;top:531px;">20 Edges Selected</span>
<div class="hdr" style="left:915px;top:558px;width:158px;height:15px;"></div>
<span class="m14" style="left:921px;top:560px;">+</span>
<span class="m14" style="left:945px;top:560px;">Soft Selection</span>
<div style="left:911px;top:563px;width:4px;height:6px;border-left:1px solid #777;border-top:1px solid #777;border-bottom:1px solid #777;"></div>
<div style="left:1073px;top:563px;width:3px;height:6px;border-right:1px solid #777;border-top:1px solid #777;border-bottom:1px solid #777;"></div>
<div style="left:911px;top:586px;width:165px;height:143px;border-left:1px solid #777;border-right:1px solid #777;"></div>
<div class="hdr" style="left:915px;top:578px;width:158px;height:15px;"></div>
<span class="m14" style="left:921px;top:580px;">-</span>
<span class="m14" style="left:959px;top:580px;">Edit Edges</span>
<div class="btn" style="left:919px;top:601px;width:72px;height:18px;"><span class="m14" style="position:absolute;left:14.0px;top:2.5px;">Remove</span></div>
<div class="btn" style="left:996px;top:601px;width:72px;height:18px;"><span class="m14" style="position:absolute;left:17.5px;top:2.5px;">Split</span></div>
<div class="btn" style="left:919px;top:623px;width:72px;height:18px;"><span class="m14" style="position:absolute;left:-10.5px;top:2.5px;">Insert Vertex</span></div>
<div class="btn" style="left:996px;top:623px;width:57px;height:18px;"><span class="m14" style="position:absolute;left:13.5px;top:2.5px;">Weld</span></div>
<div class="btn" style="left:1054px;top:623px;width:15px;height:17px;"></div>
<svg style="left:1056px;top:626px" width="11" height="11" viewBox="0 0 11 11"><rect x="0.500" y="0.500" width="9" height="9" fill="#d0d0d0" stroke="#111"/><rect x="0.500" y="0.500" width="9" height="2.500" fill="#111"/></svg>
<div class="btn" style="left:919px;top:646px;width:56px;height:18px;"><span class="m14" style="position:absolute;left:2.5px;top:2.5px;">Extrude</span></div>
<div class="btn" style="left:976px;top:646px;width:15px;height:17px;"></div>
<svg style="left:978px;top:649px" width="11" height="11" viewBox="0 0 11 11"><rect x="0.500" y="0.500" width="9" height="9" fill="#d0d0d0" stroke="#111"/><rect x="0.500" y="0.500" width="9" height="2.500" fill="#111"/></svg>
<div class="btn" style="left:996px;top:646px;width:72px;height:18px;"><span class="m14" style="position:absolute;left:-3.5px;top:2.5px;">Target Weld</span></div>
<div class="btn" style="left:919px;top:669px;width:56px;height:18px;background:#f5cc50;border-color:#777 #fff #fff #777;"><span class="m14" style="position:absolute;left:2.5px;top:2.5px;">Chamfer</span></div>
<div class="btn" style="left:976px;top:669px;width:15px;height:17px;"></div>
<svg style="left:978px;top:672px" width="11" height="11" viewBox="0 0 11 11"><rect x="0.500" y="0.500" width="9" height="9" fill="#d0d0d0" stroke="#111"/><rect x="0.500" y="0.500" width="9" height="2.500" fill="#111"/></svg>
<div class="btn" style="left:996px;top:669px;width:57px;height:18px;"><span class="m14" style="position:absolute;left:3.0px;top:2.5px;">Connect</span></div>
<div class="btn" style="left:1054px;top:669px;width:15px;height:17px;"></div>
<svg style="left:1056px;top:672px" width="11" height="11" viewBox="0 0 11 11"><rect x="0.500" y="0.500" width="9" height="9" fill="#d0d0d0" stroke="#111"/><rect x="0.500" y="0.500" width="9" height="2.500" fill="#111"/></svg>
<div class="btn" style="left:919px;top:692px;width:149px;height:18px;"><span class="m14" style="position:absolute;left:-21.0px;top:2.5px;">Create Shape From Selection</span></div>
<div style="left:918px;top:716px;width:152px;height:13px;border:1px solid #777;border-bottom:none;box-shadow:inset 1px 1px 0 #eee;"></div>
<div style="left:932px;top:724px;width:60px;height:5px;overflow:hidden;"><span class="s11" style="left:0;top:0;">Weight:</span></div>
<div style="left:976px;top:722px;width:56px;height:7px;background:#e2e2e2;border:2px solid;border-color:#222 #fff #fff #222;border-bottom:none;"></div>
<div style="left:980px;top:725px;width:30px;height:4px;overflow:hidden;"><span class="m14" style="left:0;top:0;">1.0</span></div>
<div class="btn" style="left:1036px;top:722px;width:11px;height:7px;border-bottom:none;"></div>
<svg style="left:1038px;top:724px" width="7" height="4" viewBox="0 0 7 4"><path d="M3.500 0L7 4H0z" fill="#000"/></svg>
<div style="left:64px;top:691px;width:840px;height:19px;background:#c0c0c0;"></div>
<div style="left:64px;top:710px;width:840px;height:27px;background:#c8c8c8;"></div>
<div style="left:64px;top:132px;width:1024px;height:1px;background:#6a6a6a;"></div>
<div style="left:64px;top:691px;width:16px;height:17px;background:#c5c5c5;border:1px solid;border-color:#fff #777 #777 #fff;"></div>
<svg style="left:67px;top:693px" width="8" height="12" viewBox="0 0 8 12"><path d="M6.500 1L1 5.500L6.500 10" fill="none" stroke="#333" stroke-width="1"/></svg>
<div style="left:81px;top:691px;width:124px;height:17px;background:#c5c5c5;border:1px solid;border-color:#fff #000 #000 #fff;box-shadow:inset -1px -1px 0 #666;"></div>
<span class="s11" style="left:116px;top:692.500px;font-size:12.5px;word-spacing:7px;letter-spacing:-0.3px;">0 / 100</span>
<div style="left:206px;top:691px;width:15px;height:17px;background:#c5c5c5;border:1px solid;border-color:#fff #777 #777 #fff;"></div>
<svg style="left:209px;top:693px" width="8" height="12" viewBox="0 0 8 12"><path d="M1.500 1L7 5.500L1.500 10" fill="none" stroke="#333" stroke-width="1"/></svg>
<div style="left:64px;top:709px;width:840px;height:1px;background:#fff;"></div>
<div style="left:64px;top:737px;width:1024px;height:1px;background:#e8e8e8;"></div>
<svg style="left:64px;top:709px" width="840" height="29" viewBox="64 709 840 29"><path d="M117.5 711V736 M124.5 711V721 M132.5 711V721 M139.5 711V721 M146.5 711V721 M154.5 711V721 M161.5 711V721 M168.5 711V721 M176.5 711V721 M183.5 711V721 M190.5 711V736 M198.5 711V721 M205.5 711V721 M212.5 711V721 M220.5 711V721 M227.5 711V721 M234.5 711V721 M242.5 711V721 M249.5 711V721 M256.5 711V721 M264.5 711V736 M271.5 711V721 M278.5 711V721 M286.5 711V721 M293.5 711V721 M300.5 711V721 M308.5 711V721 M315.5 711V721 M323.5 711V721 M330.5 711V721 M337.5 711V736 M345.5 711V721 M352.5 711V721 M359.5 711V721 M367.5 711V721 M374.5 711V721 M381.5 711V721 M389.5 711V721 M396.5 711V721 M403.5 711V721 M411.5 711V736 M418.5 711V721 M425.5 711V721 M433.5 711V721 M440.5 711V721 M447.5 711V721 M455.5 711V721 M462.5 711V721 M469.5 711V721 M477.5 711V721 M484.5 711V736 M491.5 711V721 M499.5 711V721 M506.5 711V721 M513.5 711V721 M521.5 711V721 M528.5 711V721 M535.5 711V721 M543.5 711V721 M550.5 711V721 M557.5 711V736 M565.5 711V721 M572.5 711V721 M579.5 711V721 M587.5 711V721 M594.5 711V721 M601.5 711V721 M609.5 711V721 M616.5 711V721 M623.5 711V721 M631.5 711V736 M638.5 711V721 M645.5 711V721 M653.5 711V721 M660.5 711V721 M668.5 711V721 M675.5 711V721 M682.5 711V721 M690.5 711V721 M697.5 711V721 M704.5 711V736 M712.5 711V721 M719.5 711V721 M726.5 711V721 M734.5 711V721 M741.5 711V721 M748.5 711V721 M756.5 711V721 M763.5 711V721 M770.5 711V721 M778.5 711V736 M785.5 711V721 M792.5 711V721 M800.5 711V721 M807.5 711V721 M814.5 711V721 M822.5 711V721 M829.5 711V721 M836.5 711V721 M844.5 711V721 M851.5 711V736" stroke="#8c8c8c" stroke-width="1"/></svg>
<div style="left:113px;top:711px;width:9px;height:25px;background:rgba(170,198,228,.85);border:1px solid #7c98b8;"></div>
<span class="s11" style="left:114.0px;top:723px;font-size:12px;letter-spacing:-0.6px;">0</span>
<span class="s11" style="left:184.3px;top:723px;font-size:12px;letter-spacing:-0.6px;">10</span>
<span class="s11" style="left:257.7px;top:723px;font-size:12px;letter-spacing:-0.6px;">20</span>
<span class="s11" style="left:331.1px;top:723px;font-size:12px;letter-spacing:-0.6px;">30</span>
<span class="s11" style="left:404.5px;top:723px;font-size:12px;letter-spacing:-0.6px;">40</span>
<span class="s11" style="left:477.9px;top:723px;font-size:12px;letter-spacing:-0.6px;">50</span>
<span class="s11" style="left:551.3px;top:723px;font-size:12px;letter-spacing:-0.6px;">60</span>
<span class="s11" style="left:624.7px;top:723px;font-size:12px;letter-spacing:-0.6px;">70</span>
<span class="s11" style="left:698.1px;top:723px;font-size:12px;letter-spacing:-0.6px;">80</span>
<span class="s11" style="left:771.5px;top:723px;font-size:12px;letter-spacing:-0.6px;">90</span>
<span class="s11" style="left:841.9px;top:723px;font-size:12px;letter-spacing:-0.6px;">100</span>
<svg style="left:77px;top:715px" width="18" height="17" viewBox="0 0 18 17"><rect x="0.500" y="0.500" width="16" height="5" fill="#fff" stroke="#111"/><path d="M2 3.500c3-2 5 1 7 0s3-1 6-.5" fill="none" stroke="#111" stroke-width=".8"/><path d="M4.500 12.500v-5M2.500 9.500l2-2l2 2M12.500 7.500v5M10.500 10.500l2 2l2-2" fill="none" stroke="#111" stroke-width="1.200"/><rect x="0.500" y="13.500" width="16" height="3" fill="#fff" stroke="#111"/><path d="M2 15h13" stroke="#111" stroke-dasharray="1 1"/></svg>
<div style="left:65px;top:739px;width:299px;height:21px;background:#dcc3c3;border:2px solid;border-color:#555 #fff #fff #555;"></div>
<div style="left:65px;top:762px;width:299px;height:21px;background:#fff;border:2px solid;border-color:#555 #fff #fff #555;"></div>
<div style="left:367px;top:739px;width:4px;height:47px;border-left:1px solid #fff;border-right:1px solid #777;"></div>
<svg style="left:379px;top:743px" width="9" height="13" viewBox="0 0 9 13"><path d="M2 6V3.500c0-3.500 5-3.500 5 0V6" fill="none" stroke="#111" stroke-width="1.200"/><rect x="0.500" y="6" width="8" height="6.500" fill="#111"/><path d="M1.500 8h6M1.500 10h6" stroke="#ddd" stroke-width=".8"/></svg>
<svg style="left:403px;top:742px" width="16" height="16" viewBox="0 0 16 16"><rect x="0.500" y="0.500" width="14.500" height="14.500" fill="#e4e4e4" stroke="#111"/><path d="M7.800 1v13.500M1 7.800h13.500" stroke="#111" stroke-width=".8"/><circle cx="7.800" cy="7.800" r="2" fill="#111"/></svg>
<span class="m14" style="left:426px;top:745px;">X:</span>
<div style="left:437px;top:741px;width:57px;height:20px;background:#dcdcdc;border:2px solid;border-color:#444 #fff #fff #444;overflow:hidden;"><span class="m14" style="left:2px;top:3px;color:#888;">-170.423mm</span></div>
<span class="m14" style="left:508px;top:745px;">Y:</span>
<div style="left:519px;top:741px;width:57px;height:20px;background:#dcdcdc;border:2px solid;border-color:#444 #fff #fff #444;overflow:hidden;"><span class="m14" style="left:2px;top:3px;color:#888;">-17.22mm</span></div>
<span class="m14" style="left:590px;top:745px;">Z:</span>
<div style="left:601px;top:741px;width:47px;height:20px;background:#dcdcdc;border:2px solid;border-color:#444 #fff #fff #444;overflow:hidden;"><span class="m14" style="left:2px;top:3px;color:#888;">0.0mm</span></div>
<div style="left:372px;top:764px;width:171px;height:22px;border:1px solid;border-color:#777 #fff #fff #777;overflow:hidden;"><span class="m14" style="left:4px;top:5px;">Click or click-and-drag to select objects</span></div>
<div style="left:546px;top:764px;width:99px;height:22px;border:1px solid;border-color:#777 #fff #fff #777;overflow:hidden;"><span class="m14" style="left:5px;top:5px;">Add Time Tag</span></div>
<div class="btn" style="left:646px;top:739px;width:44px;height:44px;"></div>
<svg style="left:655px;top:753px" width="26" height="12" viewBox="0 0 26 12"><circle cx="5.500" cy="6" r="4.200" fill="#f4f4f4" stroke="#000" stroke-width="2"/><path d="M10 6h15M19 6v4.500M23 6v4.500" stroke="#000" stroke-width="2.200" fill="none"/></svg>
<div class="btn" style="left:693px;top:739px;width:48px;height:22px;"><span class="m14" style="position:absolute;left:-5.0px;top:4.5px;">Auto Key</span></div>
<div class="btn" style="left:693px;top:762px;width:48px;height:21px;"><span class="m14" style="position:absolute;left:-1.5px;top:4.0px;">Set Key</span></div>
<div style="left:745px;top:739px;width:113px;height:22px;background:#e2e2e2;border:2px solid;border-color:#555 #fff #fff #555;"></div>
<span class="m14" style="left:749px;top:745px;">Selected</span>
<div style="left:840px;top:741px;width:16px;height:18px;background:#ece9d8;border:1px solid;border-color:#fff #555 #555 #fff;box-shadow:inset -1px -1px 0 #aca899;"></div>
<svg style="left:844px;top:748px" width="8" height="4" viewBox="0 0 8 4"><path d="M0 0h8l-4 4z" fill="#000"/></svg>
<div class="btn" style="left:745px;top:762px;width:113px;height:21px;"><span class="m14" style="position:absolute;left:6.5px;top:4.0px;">Key Filters...</span></div>
<svg style="left:868px;top:745px" width="16" height="8" viewBox="0 0 16 8"><path d="M1 0v8" stroke="#000" stroke-width="2"/><path d="M9 0v8l-6.500-4zM16 0v8l-6.500-4z" fill="#000"/><path d="M3 4h12" stroke="#000" stroke-width="2"/></svg>
<div style="left:889px;top:742px;width:2px;height:16px;border-left:1px solid #777;border-right:1px solid #fff;"></div>
<svg style="left:896px;top:745px" width="14" height="8" viewBox="0 0 14 8"><path d="M6 0.500v7l-6-3.500z" fill="#000"/><path d="M8.500 0.500v7M12 0.500v7" stroke="#000" stroke-width="2"/></svg>
<div style="left:917px;top:742px;width:16px;height:15px;border:2px solid #000;background:#d0d0d0;"></div>
<svg style="left:922px;top:746px" width="7" height="7" viewBox="0 0 7 7"><path d="M0 0v7l7-3.500z" fill="#000"/></svg>
<svg style="left:932px;top:756px" width="3" height="3" viewBox="0 0 3 3"><path d="M3 0v3h-3z" fill="#222"/></svg>
<svg style="left:940px;top:745px" width="14" height="8" viewBox="0 0 14 8"><path d="M8 0.500v7l6-3.500z" fill="#000"/><path d="M1.500 0.500v7M5 0.500v7" stroke="#000" stroke-width="2"/></svg>
<div style="left:961px;top:742px;width:2px;height:16px;border-left:1px solid #777;border-right:1px solid #fff;"></div>
<svg style="left:966px;top:745px" width="16" height="8" viewBox="0 0 16 8"><path d="M15 0v8" stroke="#000" stroke-width="2"/><path d="M0 0v8l6.500-4zM7 0v8l6.500-4z" fill="#000"/><path d="M1 4h12" stroke="#000" stroke-width="2"/></svg>
<div style="left:989px;top:742px;width:2px;height:16px;border-left:1px solid #777;border-right:1px solid #fff;"></div>
<svg style="left:871px;top:767px" width="12" height="8" viewBox="0 0 12 8"><path d="M0.800 0v8M11.200 0v8" stroke="#000" stroke-width="1.600"/><path d="M6 0.500v7l-4.500-3.500zM6 0.500v7l4.500-3.500z" fill="#000"/></svg>
<div style="left:889px;top:764px;width:2px;height:18px;border-left:1px solid #777;border-right:1px solid #fff;"></div>
<div style="left:892px;top:763px;width:48px;height:20px;background:#e2e2e2;border:2px solid;border-color:#444 #fff #fff #444;"><span class="m14" style="left:2px;top:2px;">0</span></div>
<svg style="left:995px;top:741px" width="17" height="17" viewBox="0 0 17 17"><circle cx="6" cy="6" r="4.700" fill="#f4f6ff" stroke="#223" stroke-width="1.100"/><path d="M9.500 9.500l5 5.500" stroke="#2a3aa0" stroke-width="2.400"/><path d="M3.500 5.500c.3-1.500 1.500-2.500 3-2.500" stroke="#fff" stroke-width="1" fill="none"/></svg>
<svg style="left:1017px;top:741px" width="18" height="18" viewBox="0 0 18 18"><rect x="4.500" y="1.500" width="11.500" height="10.500" fill="none" stroke="#a02020" stroke-width="1.100"/><path d="M10.300 1.500v10.500M4.500 6.700h11.500" stroke="#a02020" stroke-width="1.100"/><circle cx="5" cy="10.500" r="3.400" fill="#f4f6ff" stroke="#223" stroke-width="1"/><path d="M7.500 13l3.500 3.500" stroke="#2a3aa0" stroke-width="2"/></svg>
<svg style="left:1041px;top:742px" width="17" height="17" viewBox="0 0 17 17"><path d="M0.500 3.500V0.500h3M13.500 0.500h3V3.500M16.500 12.500V15.500h-3M3.500 15.500H0.500v-3" fill="none" stroke="#111" stroke-width="1.100"/><path d="M3.500 5.500h7v7.500h-7zM3.500 5.500l2.500-2.500h7l-2.500 2.500M13 3v7.500l-2.500 2.500" fill="#e8ecf8" stroke="#223" stroke-width="1"/></svg>
<svg style="left:1064px;top:741px" width="18" height="18" viewBox="0 0 18 18"><rect x="5.500" y="1.500" width="10.500" height="10.500" fill="none" stroke="#a02020" stroke-width="1.100"/><path d="M10.700 1.500v10.500M5.500 6.700h10.500" stroke="#a02020" stroke-width="1.100"/><path d="M0.500 10h6v6h-6zM0.500 10l2.500-2.500h6l-2.500 2.500M9 7.500v6l-2.500 2.500" fill="#e8ecf8" stroke="#2a3a9a" stroke-width="1"/></svg>
<svg style="left:1081px;top:756px" width="3" height="3" viewBox="0 0 3 3"><path d="M3 0v3h-3z" fill="#222"/></svg>
<svg style="left:1057px;top:756px" width="3" height="3" viewBox="0 0 3 3"><path d="M3 0v3h-3z" fill="#222"/></svg>
<svg style="left:1004px;top:765px" width="8" height="16" viewBox="0 0 8 16"><path d="M1 1h5v14h-5" fill="none" stroke="#111" stroke-width="1.200" stroke-dasharray="2 1"/></svg>
<svg style="left:1017px;top:763px" width="19" height="17" viewBox="0 0 19 17"><path d="M4 10C2 7 1 6 2.500 5s3 2 3.500 3V3c0-1.500 2-1.500 2 0v-1c0-1.500 2-1.500 2 0v1c0-1.500 2-1.500 2 0v2c0-1.500 2-1.500 2 0v5c0 3-1.500 5-3 6h-5.500c-1-2-2-4-3.500-6z" fill="#f0f0f0" stroke="#111" stroke-width="1"/><path d="M8 3v5M10 3v5M12 4v4" stroke="#111" stroke-width=".8"/></svg>
<svg style="left:1040px;top:763px" width="19" height="18" viewBox="0 0 19 18"><path d="M7.500 1.500v8M7.500 9.500l-6 4M7.500 9.500l8 1.500" stroke="#111" stroke-width="1.100" fill="none"/><path d="M7.500 0l2 3.500h-4zM0 15l1.200-3.800l2.400 3zM17.500 11.500l-3.800 1.500l.6-3.600z" fill="#111"/><path d="M7.500 4l-5 8.500l11.500-2z" fill="rgba(240,240,250,.6)" stroke="#333" stroke-width=".8"/><circle cx="8" cy="9" r="3.300" fill="none" stroke="#555" stroke-width=".8"/></svg>
<svg style="left:1058px;top:777px" width="3" height="3" viewBox="0 0 3 3"><path d="M3 0v3h-3z" fill="#222"/></svg>
<svg style="left:1065px;top:763px" width="16" height="16" viewBox="0 0 16 16"><rect x="0.500" y="0.500" width="9.500" height="9.500" fill="#f0f2ff" stroke="#1a2a8a" stroke-width="1"/><rect x="6.500" y="6.500" width="8" height="8" fill="#f0f2ff" stroke="#1a2a8a" stroke-width="1"/><path d="M2.500 2.500l5.500 5.500M2.500 2.500h3M2.500 2.500v3" stroke="#111" stroke-width="1" fill="none"/></svg>
<div style="left:935px;top:760px;width:74px;height:26px;background:linear-gradient(to bottom,#3a78e8,#1a56d8 50%,#1a50d0);"></div>
<svg style="left:937px;top:764px" width="4" height="20" viewBox="0 0 4 20"><g fill="#5a94f4"><rect x="1" y="1" width="2" height="2"/><rect x="1" y="5" width="2" height="2"/><rect x="1" y="9" width="2" height="2"/><rect x="1" y="13" width="2" height="2"/><rect x="1" y="17" width="2" height="2"/></g></svg>
<svg style="left:947px;top:765px" width="18" height="14" viewBox="0 0 18 14"><path d="M3 3c2-3 8-3 11 0" fill="none" stroke="#111" stroke-width="1"/><rect x="0.500" y="4.500" width="16" height="9" rx="1" fill="#f4f4f4" stroke="#111"/><path d="M2 7h13M2 9h13" stroke="#111" stroke-dasharray="1 1"/><path d="M4 11.500h9" stroke="#111"/></svg>
<div style="left:971px;top:764px;width:14px;height:15px;background:#fff8c0;border:1px solid #333;border-radius:2px;"></div>
<span style="left:974px;top:764px;font:bold 12px/14px 'Liberation Sans',sans-serif;color:#1a2ac0;">?</span>
<svg style="left:999px;top:766px" width="6" height="16" viewBox="0 0 6 16"><rect x="0" y="1" width="5" height="2" fill="#fff"/><path d="M0 10h6l-3 3.500z" fill="#fff"/></svg>
<div style="left:64px;top:786px;width:1024px;height:30px;background:linear-gradient(to bottom,#3a80f0 0%,#2a6ae8 8%,#245edc 20%,#2460de 60%,#2258d0 90%,#1a48b8 100%);"></div>
<div style="left:64px;top:786px;width:97px;height:30px;background:linear-gradient(to bottom,#5aa85a 0%,#3a9a3a 12%,#2f8f2f 50%,#2a842a 85%,#226c22 100%);border-radius:0 12px 12px 0;box-shadow:inset -2px 0 3px rgba(0,40,0,.5);"></div>
<svg style="left:75px;top:792px" width="19" height="17" viewBox="0 0 19 17"><g transform="scale(1.18,1.06)"><path d="M2 2.500c2-1.500 4-1.500 6 0l-1.200 5.500c-2-1.500-4-1.500-6 0z" fill="#e8502a"/><path d="M9 3c2 1.500 4 1.500 6 0l-1.200 5.500c-2 1.500-4 1.500-6 0z" fill="#6ac040"/><path d="M0.600 9c2-1.500 4-1.500 6 0l-1.200 5.500c-2-1.500-4-1.500-6 0z" fill="#3a7ae8"/><path d="M7.600 9.500c2 1.500 4 1.500 6 0l-1.200 5.500c-2 1.500-4 1.500-6 0z" fill="#f8c830"/></g></svg>
<span style="left:100px;top:789px;font:italic 500 19px/24px 'Liberation Sans','Noto Sans CJK SC',sans-serif;color:#fff;text-shadow:1px 1px 1px #1a4a1a;">开始</span>
<div style="left:171px;top:789px;width:158px;height:24px;background:linear-gradient(to bottom,#5a9af8 0%,#3c82f4 12%,#3a80f2 80%,#3070e0 100%);box-shadow:inset 0 0 1px #8ab8ff;border-radius:3px;"></div>
<svg style="left:180px;top:793px" width="17" height="16" viewBox="0 0 17 16"><path d="M1 4c0-1 .5-1.500 1.500-1.500h4l1.500 1.500h6c1 0 1.500.5 1.500 1.500v7c0 1-.5 1.500-1.500 1.500h-11.500c-1 0-1.500-.5-1.500-1.500z" fill="#f8d060" stroke="#a07810" stroke-width=".8"/><path d="M1 13l2.500-6h12.500l-2 6.500z" fill="#fce898" stroke="#a07810" stroke-width=".8"/></svg>
<span style="left:201px;top:794px;font:12px/16px 'Liberation Mono','Noto Sans CJK SC',monospace;letter-spacing:-1.200px;color:#fff;"><span style="position:static;letter-spacing:0;">个人作品</span></span>
<div style="left:331px;top:789px;width:158px;height:24px;background:linear-gradient(to bottom,#5a9af8 0%,#3c82f4 12%,#3a80f2 80%,#3070e0 100%);box-shadow:inset 0 0 1px #8ab8ff;border-radius:3px;"></div>
<svg style="left:340px;top:793px" width="17" height="16" viewBox="0 0 17 16"><path d="M3 1h9l3 3v11h-12z" fill="#fff" stroke="#668"/><circle cx="8" cy="9" r="4.500" fill="none" stroke="#2a6ae0" stroke-width="2"/><path d="M3 9h10" stroke="#2a6ae0" stroke-width="1.500"/><path d="M2 12c-2 4 4 2 9-4" fill="none" stroke="#2a6ae0" stroke-width="1.200"/></svg>
<span style="left:361px;top:794px;font:12px/16px 'Liberation Mono','Noto Sans CJK SC',monospace;letter-spacing:-1.200px;color:#fff;"><span style="position:static;letter-spacing:0;">多边形手机建模的</span>...</span>
<div style="left:491px;top:789px;width:158px;height:24px;background:linear-gradient(to bottom,#1a4ab0,#1e52b8 30%,#2058c0);box-shadow:inset 1px 1px 2px #0a2a80;border-radius:3px;"></div>
<svg style="left:500px;top:793px" width="17" height="16" viewBox="0 0 17 16"><rect x="0" y="2" width="16" height="12" fill="#2a2018"/><rect x="1" y="3" width="14" height="10" fill="#707070"/><rect x="1.300" y="3.500" width="1.400" height="9" fill="#e0e0e0"/><rect x="13.300" y="3.500" width="1.400" height="9" fill="#e0e0e0"/><path d="M8 3.500L11.800 5.500V10L8 12.300L4.200 10V5.500Z" fill="#fafafa"/><path d="M8 12.300V7.500M8 7.500L5.200 5.800M8 7.500L10.800 5.800" stroke="#222" stroke-width="1" fill="none"/></svg>
<span style="left:521px;top:794px;font:12px/16px 'Liberation Mono','Noto Sans CJK SC',monospace;letter-spacing:-1.200px;color:#fff;">Untitled - 3ds m...</span>
<div style="left:651px;top:789px;width:158px;height:24px;background:linear-gradient(to bottom,#5a9af8 0%,#3c82f4 12%,#3a80f2 80%,#3070e0 100%);box-shadow:inset 0 0 1px #8ab8ff;border-radius:3px;"></div>
<svg style="left:660px;top:793px" width="17" height="16" viewBox="0 0 17 16"><circle cx="8" cy="8" r="7.500" fill="#f4f4f4" stroke="#223"/><path d="M8 0.500a7.500 7.500 0 0 1 0 15c-3-3-3-12 0-15z" fill="#2a4a9a"/><circle cx="9" cy="7" r="3" fill="#f0a030"/><path d="M5 14l3-5l2 4" fill="#e03020"/></svg>
<span style="left:681px;top:794px;font:12px/16px 'Liberation Mono','Noto Sans CJK SC',monospace;letter-spacing:-1.200px;color:#fff;">Adobe Photoshop</span>
<div style="left:993px;top:786px;width:95px;height:30px;background:linear-gradient(to bottom,#2aa0f4 0%,#1a90ec 10%,#138ae8 50%,#0f80dc 90%,#0a68c0 100%);border-left:1px solid #0a3a90;box-shadow:inset 1px 0 0 #4ab8ff;"></div>
<svg style="left:984px;top:791px" width="20" height="20" viewBox="0 0 20 20"><circle cx="10" cy="10" r="9.300" fill="url(#gTray)" stroke="#b8d8ff" stroke-width="1"/><circle cx="10" cy="10" r="8" fill="none" stroke="#1a4ac0" stroke-width="1"/><path d="M12 5.500L7.500 10L12 14.500" fill="none" stroke="#fff" stroke-width="2.400"/></svg>
<svg style="left:1005px;top:793px" width="14" height="15" viewBox="0 0 16 17"><path d="M2 11l6-3l7 3l-7 4z" fill="#ddd" stroke="#555" stroke-width=".8"/><path d="M2 11v2l6 3.500v-2zM8 14.500l7-3.500v2l-7 3.500z" fill="#999" stroke="#555" stroke-width=".6"/><path d="M9 1v4h3l-4.500 5l-4-5h2.500v-4z" fill="#40b040" stroke="#1a6a1a" stroke-width=".8" transform="rotate(20 8 5)"/></svg>
<svg style="left:1022px;top:792px" width="15" height="16" viewBox="0 0 17 18"><rect x="5.500" y="0.500" width="11" height="9" fill="#3a5ac0" stroke="#223"/><rect x="7" y="2" width="8" height="6" fill="#7aa0f0"/><rect x="0.500" y="5.500" width="11" height="9" fill="#3a5ac0" stroke="#223"/><rect x="2" y="7" width="8" height="6" fill="#8ab0f8"/><path d="M3 16.500h7M12 11.500h4" stroke="#ccc" stroke-width="1.600"/></svg>
<span class="s11" style="left:1045px;top:795px;color:#fff;font-size:12px;letter-spacing:0.1px;">22:33</span>
<svg style="left:904px;top:133px" width="184" height="600" viewBox="904 133 184 600"><path d="M932.0 241.5C933.6 240.4 936.2 240.2 940.0 240.5C943.8 240.8 949.7 241.8 955.0 243.0C960.3 244.2 967.2 246.3 972.0 248.0C976.8 249.7 981.5 251.0 984.0 253.0C986.5 255.0 987.2 257.7 987.0 260.0C986.8 262.3 986.2 265.4 983.0 267.0C979.8 268.6 973.5 269.3 968.0 269.5C962.5 269.7 955.0 269.0 950.0 268.0C945.0 267.0 941.1 265.7 938.0 263.5C934.9 261.3 932.8 257.8 931.5 255.0C930.2 252.2 930.4 249.2 930.5 247.0C930.6 244.8 930.4 242.6 932.0 241.5Z" fill="none" stroke="#ff0000" stroke-width="7.500" stroke-linejoin="round"/><path d="M966.3 403.2C964.7 403.3 961.9 403.7 960.0 404.5C958.1 405.3 956.4 406.4 955.1 408.0C953.9 409.6 953.0 412.0 952.5 414.0C952.0 416.0 952.1 416.3 951.9 420.0C951.7 423.7 951.1 431.2 951.1 436.0C951.1 440.8 951.0 445.5 951.9 448.7C952.8 451.9 955.0 453.3 956.7 455.1C958.4 456.9 960.1 458.2 962.0 459.5C963.9 460.8 965.0 462.1 967.9 463.1C970.8 464.1 975.9 465.1 979.1 465.5C982.3 465.9 984.6 465.8 987.0 465.5C989.4 465.2 991.7 465.6 993.5 463.9C995.3 462.2 997.4 458.4 997.9 455.1C998.4 451.8 997.4 447.4 996.7 443.9C996.0 440.4 995.1 437.5 993.5 434.3C991.9 431.1 989.2 427.6 987.1 424.7C985.0 421.8 982.8 419.3 980.7 416.7C978.6 414.1 976.2 410.9 974.3 408.8C972.4 406.7 970.8 404.9 969.5 404.0C968.2 403.1 967.9 403.1 966.3 403.2Z M958.3 419.1C959.6 417.6 963.1 418.6 966.0 418.6C968.9 418.6 973.9 417.8 975.9 419.1C977.9 420.4 977.0 423.8 978.3 426.3C979.6 428.8 982.2 431.4 983.9 434.3C985.6 437.2 987.5 441.0 988.7 443.9C989.9 446.8 991.4 449.5 991.1 451.9C990.8 454.3 990.2 457.3 987.1 458.3C984.0 459.3 976.4 458.8 972.7 458.0C969.0 457.2 967.1 455.4 964.7 453.8C962.3 452.2 959.4 453.0 958.3 448.7C957.2 444.4 958.0 432.8 958.0 427.9C958.0 423.0 957.0 420.7 958.3 419.1Z" fill="#ff0000" fill-rule="evenodd" stroke="#ff0000" stroke-width="1"/><path d="M919.8 645.3C922.7 645.0 931.6 643.8 937.3 643.7C943.0 643.6 949.3 644.0 954.0 644.5C958.7 645.0 962.4 645.4 965.7 647.0C969.0 648.6 971.2 651.1 974.0 654.3C976.8 657.5 979.9 662.4 982.3 666.0C984.7 669.6 987.4 672.1 988.2 676.0C989.0 679.9 988.8 685.4 987.3 689.3C985.8 693.2 982.3 697.1 979.0 699.3C975.7 701.5 971.5 702.3 967.3 702.7C963.1 703.1 959.0 702.6 954.0 701.8C949.0 701.0 942.6 699.1 937.3 697.7C932.0 696.3 926.5 695.5 922.3 693.5C918.1 691.5 914.4 688.6 912.3 686.0C910.2 683.4 909.6 681.3 909.8 677.7C909.9 674.1 911.5 668.5 913.2 664.3C914.9 660.1 917.7 655.7 919.8 652.7C921.9 649.7 924.7 647.5 925.7 646.5" fill="none" stroke="#ff0000" stroke-width="6.500" stroke-linejoin="round" stroke-linecap="round"/><path d="M918 645L928 643.500" stroke="#ff0000" stroke-width="8" stroke-linecap="round"/></svg>
</body></html>
